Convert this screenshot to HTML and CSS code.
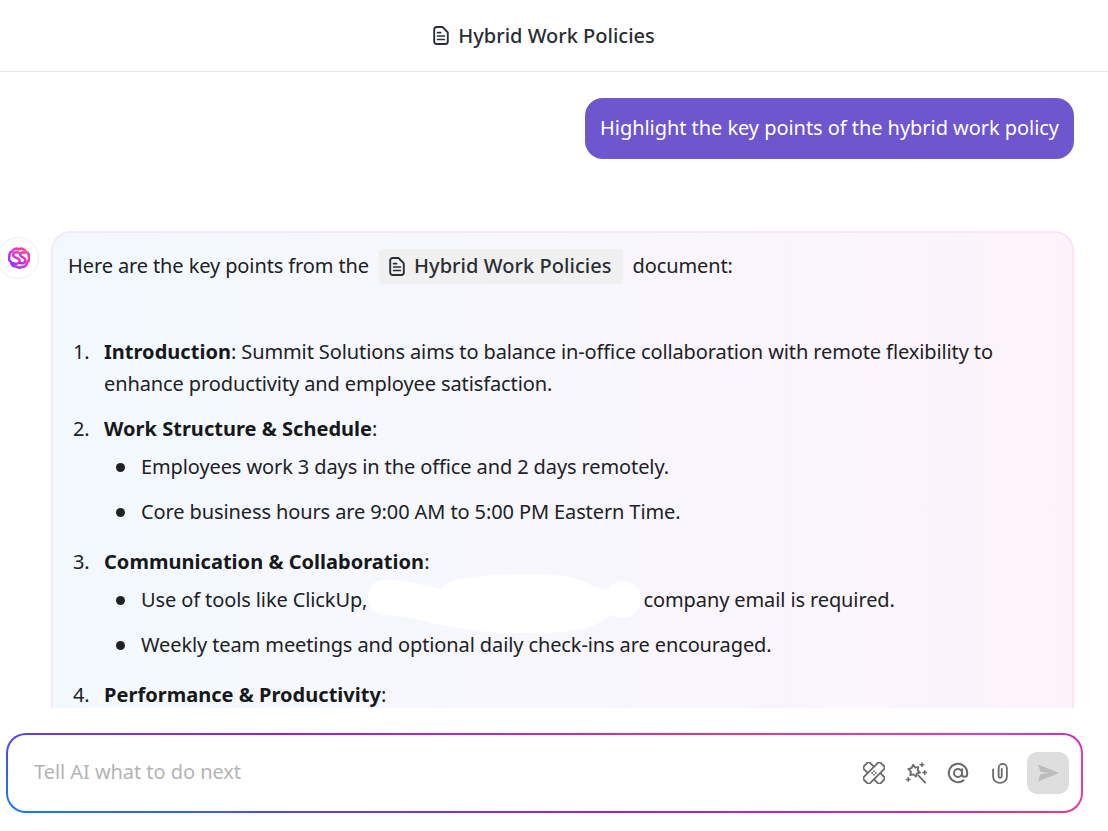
FILE: index.html
```html
<!DOCTYPE html>
<html lang="en">
<head>
<meta charset="utf-8">
<title>Hybrid Work Policies</title>
<link rel="stylesheet" href="styles.css">
</head>
<body>
<div class="app">
  <header class="topbar">
    <svg class="doc-icon" viewBox="0 0 16 19"><path d="M1.200 3.500a2.500 2.500 0 0 1 2.500-2.500h5.800l5.300 5.300v9.200a2.500 2.500 0 0 1-2.500 2.500H3.700a2.500 2.500 0 0 1-2.500-2.500z" fill="none" stroke="currentColor" stroke-width="1.900" stroke-linejoin="round"/><path d="M4.600 6.700h3M4.600 10h6.800M4.600 13.500h6.800" stroke="currentColor" stroke-width="1.700" stroke-linecap="round"/></svg>
    <span class="topbar-title">Hybrid Work Policies</span>
  </header>
  <main class="thread">
    <div class="user-row"><div class="user-bubble">Highlight the key points of the hybrid work policy</div></div>
    <div class="ai-row">
      <div class="avatar">
        <svg viewBox="0 0 24 24" class="avatar-logo"><defs><linearGradient id="lg" x1="0" y1="1" x2="1" y2="0"><stop offset="0" stop-color="#7a3dff"/><stop offset=".55" stop-color="#ee2fc8"/><stop offset=".85" stop-color="#f53fa0"/><stop offset="1" stop-color="#ff8a50"/></linearGradient></defs><g fill="none" stroke="url(#lg)" stroke-width="2.800" stroke-linecap="round" stroke-linejoin="round"><path d="M12 2.500C9.500 1 6 1.800 5 4.500 2.600 5.300 1.300 7.500 1.500 10c-.8 2.500-.2 5 1.800 6.500.3 3 2.700 5 5.700 4.800 2 1.500 4.500 1.500 6.500.2 3 .3 5-1.800 5.300-4.500 2-1.500 2.800-4 2-6.500.3-2.800-1.300-5-3.800-5.700-1-2.800-4-3.800-6.500-2.500"/><path d="M12.500 6.500C9.500 4.500 5.500 6 5.700 9c.2 3 6.800 2.800 7 6 .2 2.900-4 4.300-7.200 2.500"/><path d="M18.500 6.500c-2.500-1.300-5.300-.3-5.300 2 0 2.700 5.800 2.700 5.800 6 0 2.800-3.300 4-6 2.800"/></g></svg>
      </div>
      <article class="ai-card">
        <p class="intro">Here are the key points from the <span class="doc-chip"><svg class="doc-icon" viewBox="0 0 16 19"><path d="M1.200 3.500a2.500 2.500 0 0 1 2.500-2.500h5.800l5.300 5.300v9.200a2.500 2.500 0 0 1-2.500 2.500H3.700a2.500 2.500 0 0 1-2.500-2.500z" fill="none" stroke="currentColor" stroke-width="1.900" stroke-linejoin="round"/><path d="M4.600 6.700h3M4.600 10h6.800M4.600 13.500h6.800" stroke="currentColor" stroke-width="1.700" stroke-linecap="round"/></svg><b>Hybrid Work Policies</b></span> document:</p>
        <ol class="points">
          <li class="point-first"><b>Introduction</b>: Summit Solutions aims to balance in-office collaboration with remote flexibility to enhance productivity and employee satisfaction.</li>
          <li><b>Work Structure &amp; Schedule</b>:
            <ul>
              <li>Employees work 3 days in the office and 2 days remotely.</li>
              <li>Core business hours are 9:00 AM to 5:00 PM Eastern Time.</li>
            </ul>
          </li>
          <li><b>Communication &amp; Collaboration</b>:
            <ul>
              <li>Use of tools like ClickUp, <span class="hidden-gap"></span> company email is required.</li>
              <li>Weekly team meetings and optional daily check-ins are encouraged.</li>
            </ul>
          </li>
          <li><b>Performance &amp; Productivity</b>:</li>
        </ol>
      </article>
    </div>
    <svg class="redaction" viewBox="85 28 818 177"><path d="M85 100C85 65 105 45 135 45 190 45 250 62 305 72 320 50 345 42 400 38 460 30 520 28 570 28 640 28 700 34 740 55 755 65 775 72 800 76 815 58 830 50 850 50 880 50 903 72 903 103 903 135 880 158 850 158 835 158 820 155 810 150 790 170 760 185 720 195 660 205 590 205 530 205 450 205 370 195 300 180 250 168 190 152 130 150 105 148 85 130 85 100Z" fill="#fff"/></svg>
  </main>
  <footer class="composer-wrap">
    <div class="composer">
      <span class="placeholder">Tell AI what to do next</span>
      <div class="tools">
        <svg class="tool" viewBox="0 0 24 24" fill="none" stroke="currentColor" stroke-width="2" stroke-linejoin="round"><rect x="-1" y="7.200" width="26" height="9.600" rx="2.600" transform="rotate(45 12 12)" fill="#fff"/><rect x="-1" y="7.200" width="26" height="9.600" rx="2.600" transform="rotate(-45 12 12)" fill="#fff"/><path d="M10 12h.01M14 12h.01M12 10h.01M12 14h.01" stroke-linecap="round"/></svg>
        <svg class="tool" viewBox="0 0 24 24" fill="none" stroke="currentColor" stroke-width="2" stroke-linejoin="round" stroke-linecap="round"><path d="M9 3l1.900 3.100 3.600-.6-.7 3.500 2.600 2.500-3.500 1-1 3.400-2.700-2.400-3.500.7.700-3.600L3.700 7.600l3.400-1z"/><path d="M14.500 14.500l7.500 8"/><path d="M18.500 1v4M16.500 3h4M21.500 9.500v4M19.500 11.500h4M3.500 17v4M1.500 19h4" stroke-width="1.700"/></svg>
        <svg class="tool" viewBox="0 0 24 24" fill="none" stroke="currentColor" stroke-width="2.200" stroke-linecap="round"><circle cx="12" cy="12" r="4.400"/><path d="M16.400 7.800v5.600a2.800 2.800 0 0 0 5.600 0V12a10 10 0 1 0-4 8"/></svg>
        <svg class="tool" viewBox="0 0 24 24" fill="none" stroke="currentColor" stroke-width="2" stroke-linecap="round"><path d="M4.500 8v8a7.500 6.800 0 0 0 15 0V6.500a4.500 4.500 0 0 0-9 0V15.500a1.700 1.700 0 0 0 3.400 0V7.500"/></svg>
        <button class="send" type="button"><svg viewBox="0 0 24 24" class="send-icon"><path d="M2 3.500L23 12 2 20.500l2.500-7.300L13 12l-8.500-1.200z" fill="#bcbcbc"/></svg></button>
      </div>
    </div>
  </footer>
</div>
</body>
</html>
```

FILE: styles.css
```css
* { box-sizing: border-box; }
html, body { margin: 0; height: 100%; background: #fff; }
body { font-family: "Noto Sans", "Open Sans", sans-serif; color: #202124; overflow: hidden; }
.app { width: 1108px; height: 831px; display: flex; flex-direction: column; }

.topbar { height: 72px; flex: none; border-bottom: 1px solid #e8e8e8; display: flex; align-items: center; justify-content: center; gap: 9px; padding-right: 20px; font-size: 20px; }
.topbar-title { font-weight: 500; color: #2a2e34; letter-spacing: 0; }
.doc-icon { width: 16px; height: 19px; color: #2a2e34; flex: none; }

.thread { position: relative; height: 636px; flex: none; overflow: hidden; padding-top: 26px; }
.user-row { display: flex; justify-content: flex-end; padding-right: 34px; }
.user-bubble { height: 61px; width: 489px; border-radius: 18px; background: #6e56cf; color: #fff; font-size: 20px; letter-spacing: -0.05px; display: flex; align-items: center; padding: 0 15px 2px; white-space: nowrap; }

.ai-row { display: flex; align-items: flex-start; margin-top: 72px; padding-right: 34px; }
.avatar { width: 42px; height: 42px; margin: 6px 12px 0 -3px; flex: none; border-radius: 50%; background: #fff; border: 1px solid #ededed; display: flex; align-items: center; justify-content: center; }
.avatar-logo { width: 22px; height: 22px; margin-left: 2px; }
.ai-card { width: 1023px; flex: none; height: 700px; border: 2px solid #f7e6f8; border-radius: 20px; background: linear-gradient(90deg, #f2f9fe 0%, #f7f7fd 45%, #fdf3fb 100%); padding: 15px 15px; font-size: 20px; letter-spacing: -0.11px; color: #202124; }
.intro { margin: 0; height: 36px; line-height: 36px; white-space: nowrap; display: flex; align-items: center; gap: 10px; }
.doc-chip { display: inline-flex; align-items: center; gap: 9px; height: 35px; padding: 0 11px 0 10px; border-radius: 4px; background: #f0f0f0; }
.doc-chip b { font-weight: 500; color: #2a2e34; letter-spacing: 0.05px; }
.points { margin: 0; padding: 0 0 0 36px; list-style: none; counter-reset: n; }
.points > li { position: relative; counter-increment: n; line-height: 32px; margin-bottom: 13px; }
.points > li::before { content: counter(n) "."; position: absolute; left: -31px; }
.point-first { margin-top: 52px; }
.points b { font-weight: 700; color: #17181a; letter-spacing: 0.03px; }
.points ul { margin: 0; padding: 6px 0 5px 37px; list-style: none; }
.points ul li { position: relative; line-height: 32px; margin-bottom: 13px; }
.points ul li:last-child { margin-bottom: 0; }
.points ul li::before { content: ""; position: absolute; left: -25px; top: 12px; width: 9px; height: 9px; border-radius: 50%; background: #202124; }
.hidden-gap { display: inline-block; width: 266px; }

.redaction { position: absolute; left: 368px; top: 502px; width: 273px; height: 59px; }

.composer-wrap { flex: 1; padding: 25px 25px 0 6px; }
.composer { position: relative; height: 80px; border: 2px solid transparent; border-radius: 20px; background: linear-gradient(#fff, #fff) padding-box, linear-gradient(13.600deg, #1080f0 0%, #5a40f0 23.500%, #9020f0 42.600%, #e53580 73%, #e63a9f 80%, #e53ab8 94%, #c828b8 100%) border-box; display: flex; align-items: center; justify-content: space-between; padding: 0 12px 0 26px; }
.placeholder { font-size: 20px; letter-spacing: -0.05px; color: #b4b4b4; padding-bottom: 3px; }
.tools { display: flex; align-items: center; gap: 20px; color: #6b6b6b; }
.tool { width: 22px; height: 22px; flex: none; }
.send { width: 42px; height: 42px; border: 0; border-radius: 10px; background: #dedede; display: flex; align-items: center; justify-content: center; padding: 0; margin-left: -4px; }
.send-icon { width: 24px; height: 24px; }
```
